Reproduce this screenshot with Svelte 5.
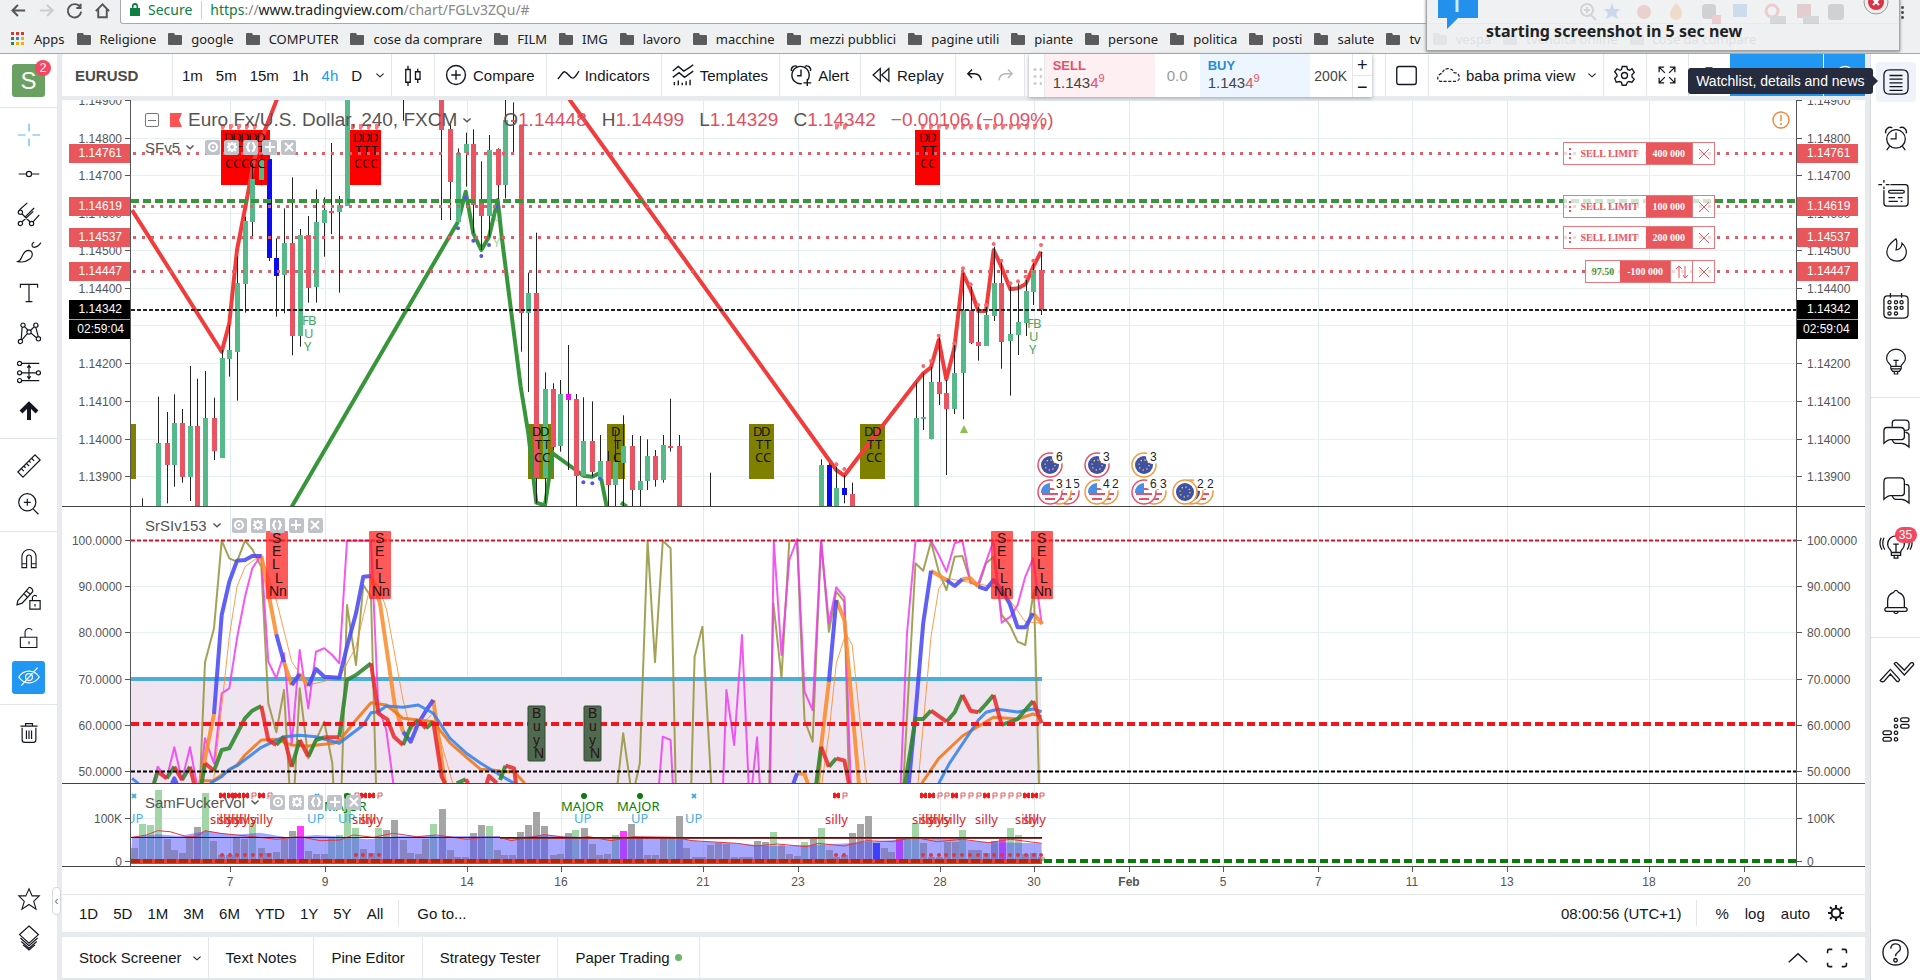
<script>
  const circle = (x, y, r) => `M${x - r} ${y}a${r} ${r} 0 1 0 ${2 * r} 0a${r} ${r} 0 1 0 ${-2 * r} 0`;

  const icons = {
    back: 'M25 14H4M13 5L4 14l9 9',
    forward: 'M3 14h21M15 5l9 9-9 9',
    reload: 'M23 8A11 11 0 1 0 25 16M24 3v7h-7',
    home: 'M3 15L14 4l11 11M7 12v13h14V12',
    cross: 'M14 1v9M14 18v9M1 14h9M18 14h9',
    hline: 'M2 14h9M17 14h9' + circle(14, 14, 3),
    pitchfork: circle(4, 12, 2.5) + circle(4, 25, 2.5) + circle(17, 25, 2.5) + 'M6 23L19 11M6 14l9 9M3 9l9-8M9 18L20 7M19 23l7-8',
    brush: 'M1 24c6-2 4-12 12-13 6 0 6 7 2 10-4 3-10 4-14 3zM18 3c-2 5 4 7 10-1M18 3l2-2',
    text: 'M4 8V4h20v4M14 4v20M10 24h8',
    pattern: circle(7, 6, 2.5) + circle(22, 6, 2.5) + circle(14, 14, 2.5) + circle(4, 25, 2.5) + circle(25, 22, 2.5) + 'M6 8L5 22M9 8l4 4M16 12l4-4M12 16l-6 7M16 15l7 6M22 9l3 11',
    forecast: circle(3, 4, 2.4) + circle(3, 15, 2.4) + circle(25, 15, 2.4) + circle(3, 24, 2.4) + 'M6 4h20M6 15h16M6 24h20M14 7v14M12 9l2-3 2 3M12 19l2 3 2-3',
    ruler: 'M1 21L21 1l6 6L7 27zM5 17l3 3M8 14l2 2M11 11l3 3M14 8l2 2M17 5l3 3',
    zoom: circle(12, 12, 10) + 'M8 12h8M12 8v8M19 20l6 6',
    magnet: 'M5 25V11a9 9 0 0 1 18 0v14h-6V12a3 3 0 0 0-6 0v13zM5 20h6M17 20h6',
    pencil: 'M1 17L13 3q1-2 3-1l2 2q1 2 0 3L6 20l-6 2zM11 6l5 4M8 9l4 4M15 17h12v10H15zM18 17v-4a3 3 0 0 1 5-1M21 21v3',
    lock: 'M3 13h21v13H3zM9 13V6a5 5 0 0 1 9-2M14 18v4',
    eye: 'M2 14c6-9 18-9 24 0-6 9-18 9-24 0z' + circle(14, 14, 4) + 'M5 24L24 3',
    trash: 'M4 6h20M10 6V3h8v3M6 8v14q0 3 3 3h10q3 0 3-3V8M11 11v10M14 11v10M17 11v10',
    star: 'M14 1l4 9h9l-7 7 3 10-9-6-9 6 3-10-7-7h9z',
    layers: 'M14 0l11 10-11 10L3 10zM4 14l10 9 10-9M5 18l9 8 9-8M7 22l7 6 7-6',
    list: 'M7 1h14q6 0 6 6v14q0 6-6 6H7q-6 0-6-6V7q0-6 6-6zM7 7h14M7 11h14M7 15h14M7 19h14M7 23h14',
    alarm: circle(14, 15, 10) + 'M14 8v7H8M3 9a5 5 0 0 1 7-6M25 9a5 5 0 0 0-7-6M7 23l-3 4M21 23l3 4',
    news: 'M8 4h16q3 0 3 3v17q0 3-3 3H4q-3 0-3-3V10M8 10h13q2 0 2 1.500t-2 1.500H8q-2 0-2-1.500t2-1.500zM6 18h7M16 18h5M6 22h10M19 22h2M1-1v3M1 6v3M-5 4h4M3 4h4',
    flame: 'M14 1c2 4 1 8 0 13 4 0 7-4 7-8 9 9 5 21-6 21S-4 14 14 1z',
    calendar: 'M5 3h18q4 0 4 4v16q0 4-4 4H5q-4 0-4-4V7q0-4 4-4zM8 0v5M20 0v5' + circle(7, 10, 1.7) + circle(14, 10, 1.7) + circle(20, 10, 1.7) + circle(7, 16, 1.7) + circle(14, 16, 1.7) + circle(20, 16, 1.7) + circle(7, 22, 1.7) + circle(14, 22, 1.7),
    bulb: 'M8 19c0-3-5-4-5-9a11 11 0 0 1 22 0c0 5-5 6-5 9zM8 19v3l2 3h8l2-3v-3M12 25v3h4v-3M11 12h6M14 12v7M8 22h12',
    stream: 'M9 21c0-3-4-4-4-9a9 9 0 0 1 18 0c0 5-4 6-4 9zM9 21v3h10v-3M12 24v3h4v-3M11 12h6M14 12v9M1 5q-3 7 1 13M-2 5q-3 7 1 13M27 5q3 7-1 13M30 5q3 7-1 13',
    chats: 'M10 6V2q0-3 3-3h11q4 0 4 4v5q0 2-5 2M4 7h15q4 0 4 4v6q0 3-3 3H8q-3 0-7 4V11q0-4 3-4zM10 20q1 4 4 4h6q4 0 8 4V15q0-2-4-3',
    chat: 'M5 1h14q4 0 4 4v12q0 3-3 3H8q-3 0-7 4V5q0-4 4-4zM10 20q1 4 4 4h6q4 0 8 4V11q0-3-4-3',
    bell: 'M5 20V13C5 8 8 5 11 4q3-5 6 0c3 1 6 4 6 9v7M4 20h20q2 0 2 2t-2 2H4q-2 0-2-2t2-2zM11 24q3 5 6 0',
    flow: 'M-3 21L8 9l10 11q-1 3-3 2l-7-8-7 8q-3 1-4-1zM12 3q2-3 4 0l7 7 7-8q3-1 3 2L23 15z',
    dom: circle(14, 3, 1.8) + circle(14, 10, 1.8) + circle(14, 17, 1.8) + circle(14, 24, 1.8) + 'M21 1h5q2 0 2 2t-2 2h-5q-2 0-2-2t2-2zM21 8h5q2 0 2 2t-2 2h-5q-2 0-2-2t2-2zM2 15h5q2 0 2 2t-2 2H2q-2 0-2-2t2-2zM2 22h5q2 0 2 2t-2 2H2q-2 0-2-2t2-2z',
    help: circle(14, 14, 13) + 'M9 10c1-7 10-6 10 0 0 4-5 3-5 8' + circle(14, 22, 1.8),
    candles: 'M5 6h6v17H5zM8 1v5M8 23v5M18 9h6v10h-6zM21 5v4M21 19v5',
    compare: circle(14, 14, 12) + 'M14 8v12M8 14h12',
    wave: 'M1 19c4-3 6-10 9-9 4 1 6 8 10 8 3 0 5-5 8-9',
    templates: 'M1 9l7-6 7 6 8-5 4-3M1 17l8-6 7 6 7-5 4-3M3 23v4M8 21v6M13 24v3M18 22v5M23 20v7',
    alert: 'M22 21a11 11 0 1 0-7 4M14 7v8H9M2 9a5 5 0 0 1 7-6M26 9a5 5 0 0 0-7-6M22 19v9M17 24h10',
    replay: 'M13 5L3 14l10 9zM25 5l-10 9 10 9z',
    undo: 'M10 4L3 11l7 7M3 11h11q9 0 11 11',
    redo: 'M18 4l7 7-7 7M25 11H14q-9 0-11 11',
    square: 'M4 2h20q3 0 3 3v18q0 3-3 3H4q-3 0-3-3V5q0-3 3-3z',
    gear: circle(14, 14, 4) + 'M11 2h6l1 4 3 1 3-2 3 5-3 3v3l3 3-3 4-4-1-2 1-2 4h-5l-1-4-3-1-4 1-2-5 3-3v-2L1 9l3-4 4 2 2-1z',
    expand: 'M3 10V3h7M3 3l8 8M18 3h7v7M25 3l-8 8M3 18v7h7M3 25l8-8M25 18v7h-7M25 25l-8-8',
    corners: 'M2 8V5q0-2 2-2h4M20 3h4q2 0 2 2v3M26 20v3q0 2-2 2h-4M8 25H4q-2 0-2-2v-3',
    camera: 'M3 8h5l2-4h8l2 4h5v15H3z' + circle(14, 15, 5),
    play: circle(14, 14, 12) + 'M11 9l8 5-8 5z',
    down: 'M4 10l10 9 10-9',
    up: 'M1 20L14 8l13 12',
    cloud: 'M7 22H4q-5-3-1-8 2-2 4-2 2-7 9-6 5 1 6 5 6 0 7 6 0 4-4 5z'
  };

  const bookmarks = ['Religione', 'google', 'COMPUTER', 'cose da comprare', 'FILM', 'IMG', 'lavoro', 'macchine', 'mezzi pubblici', 'pagine utili', 'piante', 'persone', 'politica', 'posti', 'salute', 'tv', 'vespa', 'tvendita online', 'cose da compare'];
  const drawGroups = [['cross', 'hline', 'pitchfork', 'brush', 'text', 'pattern', 'forecast', 'arrow'], ['ruler', 'zoom'], ['magnet', 'pencil', 'lock', 'eye'], ['trash']];
  const sideGroups = [['list', 'alarm', 'news', 'flame', 'calendar', 'bulb'], ['chats', 'chat', 'stream', 'bell'], ['flow', 'dom']];
  const ranges = ['1D', '5D', '1M', '3M', '6M', 'YTD', '1Y', '5Y', 'All'];

  // Chart data is kept in tile space: a tile has an origin and a number of units per pixel.
  const A = [0, 150, 3], B = [440, 90, 3], C = [860, 90, 3], D = [0, 500, 3], E = [500, 500, 2.703];
  const px = (t, x) => t[0] + x / t[2];
  const py = (t, y) => t[1] + y / 3;
  const line = (t, s) => s.split('|').map((seg) => 'M' + seg.trim().split(' ').map((p) => {
    const [x, y] = p.split(',').map(Number);
    return px(t, x).toFixed(1) + ' ' + py(t, y).toFixed(1);
  }).join('L')).join('');

  const colour = { g: '#56b98a', r: '#ea5362', b: '#0a0af5', m: '#ee10ee' };
  // x, high, body top, body bottom, low, colour
  const candleRows = [
    [A, `427 1045 0 0 1068 r;473 740 879 1070 1070 g;500 786 879 945 1060 r;523 733 819 945 1010 g;546 777 819 981 998 r;569 648 829 981 1053 g;592 686 829 1070 1070 r;615 663 803 1070 1070 g;642 743 803 902 930 r;665 600 624 924 924 g;688 525 600 628 680 g;711 320 399 605 752 g;734 200 213 402 488 g;757 40 88 216 260 g;784 0 28 92 106 g;807 28 28 326 333 b;829 265 323 376 500 b;853 175 280 376 490 g;876 82 280 558 616 r;899 237 254 558 590 g;925 198 254 412 458 r;949 118 216 412 458 g;972 142 180 220 320 g;994 -21 182 187 252 r;1018 138 165 187 428 g;1041 -150 -150 168 168 g;1209 -150 0 0 -88 r`],
    [B, `4 30 30 120 390 r;31 95 117 277 390 r;54 175 188 395 395 g;77 128 162 190 290 g;100 118 162 344 430 r;124 214 340 378 480 r;147 135 180 378 440 g;173 175 178 285 330 r;196 30 90 285 325 g;219 37 90 97 188 r;242 105 105 670 785 r;265 548 609 670 906 g;289 428 609 1165 1240 r;315 847 897 1165 1240 g;338 880 897 1070 1080 r;361 870 913 1068 1085 g;384 765 913 930 1140 m;407 912 927 1157 1248 r;430 922 1053 1157 1157 g;457 934 1053 1145 1160 r;480 1035 1112 1165 1165 g;503 1083 1112 1185 1248 r;526 1020 1115 1185 1248 g;550 976 1068 1118 1248 g;575 1035 1068 1200 1248 r;599 1038 1172 1200 1248 g;622 1048 1098 1173 1200 g;645 1080 1098 1170 1190 r;668 1035 1065 1170 1178 g;691 926 1067 1072 1085 r;718 1035 1068 1250 1250 r;810 1148 0 0 1248 r;1143 1108 1125 1250 1250 g;1166 1120 1125 1250 1250 b;1189 1130 1193 1250 1250 g;1213 1155 1193 1215 1240 b;1236 1178 1211 1250 1250 r`],
    [C, `167 878 983 1250 1250 g;190 850 980 986 1020 g;213 830 877 1048 1048 g;236 740 877 912 945 r;259 870 909 957 1155 r;283 760 848 957 972 g;309 540 660 850 988 g;332 590 660 758 762 r;355 650 755 768 812 r;378 650 675 768 768 g;401 470 579 678 693 g;424 515 579 755 836 r;451 590 732 754 917 g;474 580 695 735 795 g;497 570 602 697 738 g;520 520 540 605 645 g;543 485 540 660 675 r`]
  ];
  const candles = candleRows.flatMap(([t, rows]) => rows.split(';').map((row) => {
    const p = row.split(' ');
    const n = p.map(Number);
    return { x: Math.round(px(t, n[0])), hi: py(t, n[1]), top: Math.round(py(t, n[2])), h: Math.round((n[3] - n[2]) / 3), lo: py(t, n[4]), fill: colour[p[5]] };
  }));

  const redZig = line(A, '396,180 665,605 688,520 711,300 740,150 762,30 795,-60 832,-155') +
    line(B, '388,28 1189,1140 1213,1157 1329,1004') +
    line(C, '70,1004 167,878 190,850 213,832 236,750 259,868 283,775 309,550 332,600 355,663 378,663 401,480 424,530 451,598 474,595 497,582 520,530 543,485');
  const greenZig = line(A, '875,1070 1374,215') + line(B, '54,395 77,305 100,430 124,480 147,440 173,330 185,440 242,890 265,1030 289,1238 315,1246 338,1090 407,1140 430,1157 457,1160 480,1148 500,1250|543,1238 560,1250');

  const grid = [230, 325, 467, 561, 703, 798, 940, 1034, 1129, 1223, 1318, 1412, 1507, 1649, 1744];
  const dates = ['7', '9', '14', '16', '21', '23', '28', '30', 'Feb', '5', '7', '11', '13', '18', '20'];
  const prices = [[100, '1.14900'], [138, '1.14800'], [175, '1.14700'], [213, '1.14600'], [250, '1.14500'], [288, '1.14400'], [325, '1.14300'], [363, '1.14200'], [401, '1.14100'], [439, '1.14000'], [476, '1.13900']];
  const orders = [[153, '1.14761'], [206, '1.14619'], [237, '1.14537'], [271, '1.14447']];
  const tags = [...orders.map(([y, t]) => [y, t, '#e8575b']), [309, '1.14342', '#000'], [329, '02:59:04', '#000']];
  const levels = [[540, '100.0000'], [586, '90.0000'], [632, '80.0000'], [679, '70.0000'], [725, '60.0000'], [771, '50.0000']];
  const volumes = [[818, '100K'], [861, '0']];

  const boxes = [[221, 49, 5, 224], [350, 31, 3, 353], [915, 25, 2, 919]];
  const olive = [[131, 5, 0, 0], [528, 26, 2, 532], [607, 18, 1, 611], [749, 25, 2, 753], [860, 25, 2, 864]];
  const hits = [223, 231, 239, 247, 255, 353, 361, 369, 377, 837, 845, ...Array.from({ length: 16 }, (_, i) => 923 + i * 8)];
  const peaks = [[190, 828], [213, 813], [236, 737], [283, 760], [309, 535], [332, 583], [355, 645], [378, 645], [401, 462], [424, 512], [451, 580], [474, 574], [497, 560], [520, 512], [543, 465], [-71, 1123], [-47, 1137]];
  const dips = [[54, 415], [77, 323], [100, 452], [124, 498], [147, 465], [173, 350], [430, 1177], [457, 1180], [480, 1166]];

  const orange = '#fb8c2e', blue = '#4a4af5', green = '#2c862c', red = '#e82c2c';
  const osc = [
    ['#93933a', 2, line(D, '600,850 615,487 642,385 665,122 688,175 711,185 735,122 757,148 784,200 805,610 829,697 852,570 868,850|884,850 899,565 925,775 948,720 973,665 997,790 1000,850|1025,850 1041,315 1068,495 1090,255 1113,290 1128,850') + line(E, '318,850 333,700 352,850|366,850 378,790 399,122 419,487 440,122 461,145 475,850|517,850 526,470 547,380 571,850|728,850 739,310 761,533 782,122 803,122 823,660 845,725 868,122 889,395 909,275 931,305 943,850|1090,850 1123,190 1144,212 1165,125 1186,215 1207,270 1229,170 1250,168 1272,245 1293,260 1314,190 1334,170 1356,345 1378,375 1399,425 1420,435 1443,270 1457,850')],
    ['#ee3cee', 2, line(D, '460,850 473,800 500,835 523,742 546,840 570,742 590,850|600,850 615,715 642,790 665,580 688,565 711,415 735,290 757,205 784,165 805,485 829,535 852,460 875,735 899,450 925,625 948,455 973,445 997,465 1018,490 1041,122 1113,122 1135,620 1159,690 1180,850') + line(E, '430,850 440,710 461,720 467,850|603,850 612,570 633,735 654,405 672,850|682,850 695,712 702,850|730,850 740,122 761,465 782,180 803,118 823,575 845,630 868,122 889,370 909,262 931,292 948,850|1083,850 1100,400 1123,122 1165,122 1186,165 1207,215 1229,130 1250,122 1272,250 1293,250 1314,185 1334,122 1356,368 1380,350 1399,315 1420,230 1441,175 1464,370')],
    [orange, 1, line(D, '640,850 665,620 688,410 711,260 735,200 784,165 829,300 875,485 899,520 925,555 1018,533 1068,440 1113,250 1135,255 1160,330 1209,600 1232,690 1278,660 1300,640 1330,750 1358,850') + line(E, '870,850 889,700 909,490 935,400 952,435 991,850|1130,850 1165,410 1186,265 1207,235 1334,260 1356,275 1378,300 1420,365 1466,370')],
    [orange, 4, line(D, '600,850 615,775 642,642|784,168 829,403|852,487 875,555|899,522 925,558|1113,228 1140,310 1159,440 1185,620 1209,695|1300,600 1335,850') + line(E, '803,820 823,822 832,850|860,850 868,740 889,545|909,300 931,360 970,850|1165,212 1207,240|1250,237 1272,235 1293,260|1441,340 1466,372')],
    [blue, 4, line(D, '642,642 665,345 688,245 711,182 735,180 757,168 784,168|829,403 852,487|875,555 899,522|925,558 948,507 973,530 1018,533 1041,440 1068,340 1090,230 1113,228|1209,695 1232,725 1255,670 1278,632 1300,600|516,850 523,835 530,850') + line(E, '793,850 803,820|889,545 909,300|1105,850 1123,640 1144,370 1165,212|1207,240 1229,258 1250,237|1293,260 1314,268 1334,240 1356,270 1378,312 1399,382 1420,382 1441,340')],
    ['#ee7410', 3, line(D, '600,842 640,842 665,825 711,795 735,765 784,720 829,718 875,735 925,738 1000,730 1020,720 1068,660 1113,608 1159,615 1209,655 1255,660 1300,665 1349,728 1397,770 1442,808 1500,812') + line(E, '0,815 38,815 67,850|1140,850 1186,775 1250,708 1334,652 1399,657 1441,642 1464,650')],
    ['#2f80ea', 3, line(D, '396,835 415,850|630,850 665,830 688,808 711,797 784,742 852,710 899,706 948,710 1018,730 1090,675 1113,638 1135,635 1159,618 1209,622 1255,615 1300,640 1349,714 1397,758 1442,790 1500,825') + line(E, '0,825 38,850|1186,850 1215,790 1293,660 1314,637 1345,628 1399,636 1441,627 1464,635')],
    [green, 4, line(D, '462,850 473,815|500,835 523,800|546,840 570,800|605,850 615,790|642,812 665,750 688,745 735,655 757,632 784,618|829,735 852,710|875,800 899,720|925,770 948,720 973,712|1018,710 1041,540 1068,525 1113,490|1209,735 1232,680 1255,660|1278,685 1300,665|1370,850 1397,838') + line(E, '0,840 15,797|855,850 868,740|889,800 909,775|1095,850 1123,657 1144,657 1165,632|1207,665 1229,637 1250,585|1293,637 1314,612 1334,585|1356,675 1399,657 1441,603')],
    [red, 4, line(D, '473,815 500,835|523,800 546,840|570,800 582,850|615,790 642,812|784,618 805,720 829,735|852,710 875,800|899,720 925,770|973,712 1018,712|1113,490 1135,640 1162,658 1182,710 1209,735|1255,660 1278,685|1300,665 1325,830 1335,850|1397,838 1405,850|1460,850 1467,828 1490,850') + line(E, '15,797 38,805 43,850|868,740 889,800|909,775 931,782 943,850|1165,632 1207,665|1250,585 1272,632 1293,637|1334,585 1356,675|1441,603 1464,670')]
  ];

  const volColour = { o: '#bdbd8c', g: '#a3d6a6', k: '#a5a5a5', m: '#ff3cff', b: '#3030ff' };
  const volRows = [
    [D, '403 1045 o;426 972 g;450 976 g;473 870 g;500 1018 o;523 1050 o;546 1060 o;568 1012 o;591 980 k;615 880 g;639 1022 o;663 1066 o;686 1066 o;709 1012 o;733 1016 o;757 972 g;782 1044 o;805 1060 o;829 1056 o;852 1016 o;875 993 k;899 978 m;925 1053 o;948 1063 o;971 1063 o;993 1010 g;1017 1006 g;1041 878 g;1066 983 g;1088 1046 o;1112 1060 o;1135 983 g;1159 989 k;1182 959 k;1209 1020 o;1230 1060 o;1253 1063 o;1276 1016 o;1300 972 g;1325 928 k;1349 1050 o;1372 1072 o;1395 1070 o;1419 998 k;1442 975 k;1467 979 g;1490 1050 o'],
    [E, '12 1066 o;33 1066 o;55 996 k;76 976 k;97 936 k;120 979 k;142 1066 o;163 1062 o;183 999 k;204 991 g;226 983 k;248 1032 o;268 1066 o;290 1063 o;312 1006 g;333 992 m;355 972 k;376 1010 k;397 1066 o;418 1066 o;440 1018 o;461 1015 g;483 948 k;504 1044 o;526 1070 o;547 1070 o;567 1035 o;589 1030 o;610 1033 o;632 1072 o;653 1072 o;674 1072 o;695 1023 k;717 1026 k;739 996 g;760 1036 o;781 1063 o;803 1069 o;823 1025 g;845 1015 k;867 983 g;888 1050 o;909 1072 o;930 1066 o;951 999 k;972 972 k;994 948 k;1016 1030 b;1037 1044 o;1057 1056 o;1079 1012 m;1100 1015 g;1122 968 g;1144 1028 o;1165 1070 o;1186 1070 o;1208 1026 o;1229 1026 o;1250 989 g;1272 1050 o;1293 1050 o;1314 1060 o;1334 1022 k;1356 1010 m;1378 983 g;1399 1004 g;1420 1063 o;1441 1060 o;1462 1070 o']
  ];
  const bars = volRows.flatMap(([t, rows]) => rows.split(';').map((row) => {
    const [x, y, c] = row.split(' ');
    return { x: Math.round(px(t, +x)) - 3, y: Math.round(py(t, +y)), fill: volColour[c] };
  }));
  const volTop = line(D, '396,1012 470,1003 540,1008 620,992 700,1005 780,998 860,1012 950,1005 1050,1012 1100,1018 1200,1008 1500,1008') + line(E, '0,1015 120,1006 300,1015 480,1015 540,1024 640,1030 720,1038 840,1035 940,1030 1060,1020 1180,1012 1300,1025 1464,1030').replace('M', 'L');
  const volRed = line(D, '396,1012 440,1005 473,992 510,995 560,1010 590,1010 615,992 660,1000 740,1008 830,1018 900,1010 960,1022 1020,1020 1060,1005 1120,1012 1180,1000 1250,1010 1310,1005 1400,1018 1450,1012 1500,1012') + line(E, '30,1022 120,1004 200,1015 240,1010 300,1022 360,1010 470,1012 520,1022 640,1030 690,1038 750,1032 830,1040 860,1030 930,1038 990,1022 1060,1025 1120,1012 1180,1025 1250,1018 1320,1028 1380,1018 1464,1030').replace('M', 'L');
  const marks = [[222, 1], [230, 1], [237, 1], [245, 1], [253, 0], [261, 1], [269, 0], [356, 0], [363, 1], [371, 1], [379, 0], [836, 1], [844, 0], [923, 1], [931, 1], [939, 0], [946, 0], [954, 1], [962, 0], [970, 0], [978, 0], [986, 1], [994, 0], [1002, 0], [1010, 0], [1018, 0], [1026, 1], [1034, 1], [1041, 0]];
  const silly = [210, 218, 226, 234, 250, 352, 360, 825, 912, 920, 928, 943, 975, 1015, 1023];
  const ups = [[126, 819], [307, 819], [338, 819], [574, 819], [631, 819], [685, 819]];

  const events = [
    [1050, 465, 'eu', '#e8506a', '6'], [1097, 465, 'eu', '#e8506a', '3'], [1144, 465, 'eu', '#f09a3c', '3'],
    [1067, 492, 'us', '#e8506a', '5'], [1059, 492, 'us', '#f09a3c', '1'], [1050, 492, 'us', '#e8506a', '3'],
    [1106, 492, 'us', '#f09a3c', '2'], [1097, 492, 'us', '#f09a3c', '4'],
    [1154, 492, 'us', '#f09a3c', '3'], [1144, 492, 'us', '#e8506a', '6'],
    [1201, 492, 'us', '#f09a3c', '2'], [1191, 492, 'eu', '#f09a3c', '2'], [1185, 492, 'eu', '#f09a3c', '']
  ];
</script>

{#snippet icon(name, size = 22, weight = 1.4)}
  <svg width={size} height={size} viewBox="0 0 28 28" fill="none" stroke="currentColor" stroke-width={weight} overflow="visible" aria-hidden="true"><path d={icons[name]} /></svg>
{/snippet}

{#snippet folder()}
  <svg width="14" height="12" viewBox="0 0 14 12" aria-hidden="true"><path d="M0 1q0-1 1-1h5l1 2h6q1 0 1 1v8q0 1-1 1H1q-1 0-1-1z" fill="#5b5b5d" /></svg>
{/snippet}

{#snippet axis(side, top, height, ticks, labels)}
  <svg class="axis {side}" {height}>
    <g transform="translate(0 {-top})">
      {#each ticks as [y, text]}
        <path d={side === 'left' ? `M63 ${y + 0.5}h6` : `M0 ${y + 0.5}h5`} stroke="#555" />
        <text x={side === 'left' ? 60 : 10} y={y + 5} text-anchor={side === 'left' ? 'end' : 'start'}>{text}</text>
      {/each}
      {#each labels as [y, text, fill]}
        <rect x={side === 'left' ? 7 : 0} y={y - 9} width="61" height="19" {fill} />
        <text x={side === 'left' ? (text.length > 7 ? 62 : 60) : (text.length > 7 ? 6 : 10)} y={y + 4} text-anchor={side === 'left' ? 'end' : 'start'} style:fill="#fff">{text}</text>
      {/each}
      {#if labels.length}<path d={side === 'left' ? 'M7 319.5h61' : 'M0 319.5h61'} stroke="#aaa" />{/if}
    </g>
  </svg>
{/snippet}

{#snippet tools(name)}
  <button class="study">{name} {@render icon('down', 10, 4)}</button>
  <span class="mini">
    {#each [['Hide', circle(7, 7, 4) + 'M6 7h2'], ['Format', circle(7, 7, 3) + 'M7 2v2M7 10v2M2 7h2M10 7h2M3 3l2 2M9 9l2 2M11 3L9 5M3 11l2-2'], ['Source', 'M6 3q-2 0-2 2t-2 2q2 0 2 2t2 2M8 3q2 0 2 2t2 2q-2 0-2 2t-2 2'], ['Add', 'M7 2v10M2 7h10'], ['Remove', 'M3 3l8 8M11 3l-8 8']] as [label, d]}
      <button aria-label="{label} {name}"><svg width="14" height="14" viewBox="0 0 14 14" fill="none" stroke="#fff" stroke-width="2"><path {d} /></svg></button>
    {/each}
  </span>
{/snippet}

{#snippet verticals()}
  {#each grid as x}<path d="M{x + 0.5} 90V900" stroke="#e1ecf2" />{/each}
{/snippet}

<div class="browser">
  <div class="address">
    <div class="nav">
      {#each ['back', 'forward', 'reload', 'home'] as n}<button aria-label={n} class:dim={n === 'forward'}>{@render icon(n, 17, 3.2)}</button>{/each}
    </div>
    <div class="url">
      <svg width="10" height="13" viewBox="0 0 10 13"><path d="M0 5h10v8H0zM2 5V3a3 3 0 0 1 6 0v2" fill="#0b8043" stroke="none" /><path d="M3.500 5V3.500a1.500 1.500 0 0 1 3 0V5z" fill="#fff" /></svg>
      <span class="secure">Secure</span>
      <span class="link"><b>https</b><i>://</i>www.tradingview.com<i>/chart/FGLv3ZQu/#</i></span>
    </div>
    <span class="more"></span>
  </div>
  <nav class="bookmarks">
    <a href="#apps"><svg width="14" height="14" viewBox="0 0 14 14">
      {#each [['#d33c2c', 0, 0], ['#d33c2c', 5, 0], ['#d33c2c', 10, 0], ['#2b8a4a', 0, 5], ['#3b7de0', 5, 5], ['#f0b000', 10, 5], ['#2b8a4a', 0, 10], ['#f0b000', 5, 10], ['#f0b000', 10, 10]] as [fill, x, y]}<rect {x} {y} width="3" height="3" {fill} />{/each}
    </svg>Apps</a>
    {#each bookmarks as b}<a href="#{b}">{@render folder()}{b}</a>{/each}
  </nav>
  <div class="notice" role="status">
    <svg class="balloon" width="40" height="30" viewBox="0 0 40 30"><path d="M0 0h40v18H20L9 29V18H0z" fill="#2490ee" /><path d="M19 0v12" stroke="#cfe8ff" stroke-width="3" /></svg>
    <strong>starting screenshot in 5 sec new</strong>
    <button aria-label="Close notification"><svg width="26" height="26" viewBox="0 0 26 26"><circle cx="13" cy="13" r="12" fill="#eee" stroke="#999" /><circle cx="13" cy="13" r="8" fill="#d93346" /><path d="M10 10l6 6M16 10l-6 6" stroke="#fff" stroke-width="2" /></svg></button>
    <svg class="ghosts" width="290" height="24" viewBox="0 0 290 24">
      <circle cx="9" cy="10" r="6" fill="none" stroke="#555" stroke-width="2" /><path d="M13 15l5 5M6 10h6M9 7v6" stroke="#555" stroke-width="2" />
      <path d="M34 3l2 6h6l-4 4 2 6-6-3-6 3 2-6-4-4h6z" fill="#2a6de0" /><circle cx="66" cy="12" r="7" fill="#e0403c" /><path d="M98 3c8 6 8 16 0 17-8-1-8-9 0-17" fill="#f07820" />
      <rect x="124" y="4" width="14" height="15" rx="4" fill="#444" /><rect x="134" y="15" width="9" height="10" fill="#e03030" /><rect x="155" y="4" width="14" height="13" fill="#3b7de0" />
      <circle cx="194" cy="11" r="6" fill="none" stroke="#e03030" stroke-width="3" /><rect x="192" y="16" width="16" height="9" fill="#666" /><rect x="219" y="4" width="14" height="14" fill="#b03030" /><rect x="225" y="16" width="16" height="9" fill="#666" /><rect x="250" y="4" width="16" height="16" rx="3" fill="#444" />
    </svg>
  </div>
  <span class="menu"></span>
</div>

<div class="app">
  <aside class="drawing">
    <div class="account"><button class="avatar" aria-label="Account">S<span class="badge">2</span></button></div>
    {#each drawGroups as group, i}
      <div class="group g{i}">
        {#each group as n}
          <button aria-label={n} class:on={n === 'eye'} class:pale={n === 'cross'}>
            {#if n === 'arrow'}<svg width="20" height="20" viewBox="0 0 20 20"><path d="M10 19V4M2 11l8-8 8 8" fill="none" stroke="#131722" stroke-width="4" /></svg>{:else}{@render icon(n, n === 'lock' || n === 'magnet' ? 22 : 24, 1.4)}{/if}
          </button>
        {/each}
      </div>
    {/each}
    <div class="group last">
      <button aria-label="favourites">{@render icon('star')}</button>
      <button aria-label="object tree">{@render icon('layers', 24)}</button>
    </div>
    <button class="collapse" aria-label="Collapse toolbar">‹</button>
  </aside>

  <main>
    <header>
      <button class="symbol">EURUSD</button>
      <div class="cell intervals">
        {#each ['1m', '5m', '15m', '1h', '4h', 'D'] as t}<button class:active={t === '4h'}>{t}</button>{/each}
        <button aria-label="More intervals">{@render icon('down', 10, 3)}</button>
      </div>
      <button class="cell" aria-label="Chart style">{@render icon('candles', 21, 1.8)}</button>
      {#each [['compare', 'Compare'], ['wave', 'Indicators'], ['templates', 'Templates'], ['alert', 'Alert'], ['replay', 'Replay']] as [n, label]}
        <button class="cell">{@render icon(n, n === 'replay' ? 20 : 22, 1.8)}{label}</button>
      {/each}
      <div class="cell history"><button aria-label="Undo">{@render icon('undo', 17, 2.4)}</button><button aria-label="Redo" class="faint">{@render icon('redo', 17, 2.4)}</button></div>

      <div class="trade">
        <span class="grip"></span>
        <button class="quote sell"><b>SELL</b><span>1.143<em>4<sup>9</sup></em></span></button>
        <span class="spread">0.0</span>
        <button class="quote buy"><b>BUY</b><span>1.143<em>4<sup>9</sup></em></span></button>
        <button class="lots">200K</button>
        <span class="steps"><button aria-label="Increase">+</button><button aria-label="Decrease">−</button></span>
      </div>

      <button class="cell" aria-label="Layout">{@render icon('square', 21, 1.8)}</button>
      <button class="cell view">
        <svg width="27" height="22" viewBox="0 0 30 28" fill="none" stroke="#222" stroke-width="1.600" stroke-dasharray="4 2"><path d={icons.cloud} /></svg>
        baba prima view <span class="push">{@render icon('down', 10, 3)}</span>
      </button>
      <button class="cell" aria-label="Settings">{@render icon('gear', 21, 1.8)}</button>
      <button class="cell" aria-label="Fullscreen">{@render icon('expand', 20, 1.8)}</button>
      <button class="cell" aria-label="Snapshot">{@render icon('camera', 20, 1.8)}</button>
      <button class="publish" aria-label="Publish"></button>
      <button class="publish small" aria-label="Start stream">{@render icon('play', 20, 1.8)}</button>
    </header>

    <section class="chart">
      <div class="pane price">
        {@render axis('left', 100, 406, prices, tags)}
        <div class="plot">
          <svg width="100%" height="406">
            <g transform="translate(-131 -100)">
              {@render verticals()}
              {#each prices as [y]}<path d="M131 {y + 0.5}H4000" stroke="#e6eff4" />{/each}
              {#each boxes as [x, w]}<rect {x} y="130" width={w} height="55" fill="#f00" />{/each}
              {#each olive as [x, w]}<rect {x} y="424" width={w} height="55" fill="#808000" />{/each}
              <path d={redZig} class="zig" stroke="#f23c3c" />
              <path d={greenZig} class="zig" stroke="#37963a" />
              {#each candles as c}
                <path d="M{c.x + 0.5} {c.hi}V{c.lo}" stroke="#222" />
                {#if c.h > 0}<rect x={c.x - 2} y={c.top} width="5" height={c.h} fill={c.fill} />{/if}
              {/each}
              {#each boxes as [, , n, tx]}
                {#each Array(n) as _, i}<text x={tx + i * 8} y="142" class="flag">D</text><text x={tx + i * 8 + 2} y="155" class="flag">T</text><text x={tx + i * 8 + 1} y="168" class="flag">C</text>{/each}
              {/each}
              {#each olive as [, , n, tx]}
                {#each Array(n) as _, i}<text x={tx + i * 8} y="436" class="flag">D</text><text x={tx + i * 8 + 3} y="449" class="flag">T</text><text x={tx + i * 8 + 2} y="462" class="flag">C</text>{/each}
              {/each}
              {#each hits as x}<path d="M{x - 2} 124h4v3l-2 3-2-1z" fill="#ff4a4a" opacity="0.75" />{/each}
              {#each peaks as [x, y]}<circle cx={px(C, x)} cy={py(C, y)} r="2" fill="#f56b6b" />{/each}
              {#each dips as [x, y]}<circle cx={px(B, x)} cy={py(B, y)} r="2" fill="#5555ee" />{/each}
              <path d="M131 201H4000" stroke="#37963a" stroke-width="4" stroke-dasharray="8 4" />
              {#each orders as [y]}<path d="M133 {y + 0.5}H4000" stroke="#e35d66" stroke-width="3" stroke-dasharray="3 6" />{/each}
              <path d="M131 310H4000" stroke="#222" stroke-width="2" stroke-dasharray="4 2" />
              {#each [306, 1031] as x}
                <g class="buy-mark" transform="translate({x} {x > 900 ? 328 : 325})"><text x="-4">F</text><text x="2">B</text><text x="-2" y="13">U</text><text x="-2" y="26">Y</text></g>
              {/each}
              <g class="buy-mark" opacity="0.5"><text x="493" y="221">U</text><text x="493" y="247">Y</text></g>
              <path d="M960 433l4-8 4 8z" fill="#8bc34a" />
              {#each events as [x, y, kind, ring, n]}
                <circle cx={x} cy={y} r="12" fill="#fff" stroke={ring} stroke-width="1.500" />
                {#if kind === 'eu'}
                  <circle cx={x} cy={y} r="9" fill="#3f51a5" /><circle cx={x} cy={y} r="5" fill="none" stroke="#f2cf4a" stroke-width="1.300" stroke-dasharray="1.300 2.600" />
                {:else}
                  <path d="M{x - 8} {y - 3}h16M{x - 8} {y + 2}h16M{x - 5} {y + 7}h10" stroke="#e8506a" stroke-width="2" /><path d="M{x} {y - 9}a9 9 0 0 0-9 9v1h9z" fill="#4a90e2" />
                {/if}
                {#if n}<circle cx={x + 9} cy={y - 8} r="7" fill="#fff" /><text x={x + 6} y={y - 4} class="count">{n}</text>{/if}
              {/each}
            </g>
          </svg>
          <div class="legend">
            <div class="line main">
              <button class="minus" aria-label="Collapse legend"></button>
              <svg width="12" height="14" viewBox="0 0 12 14"><path d="M0 0h12L9 7l3 7H0z" fill="#ff5252" /></svg>
              <button class="title">Euro Fx/U.S. Dollar, 240, FXCM {@render icon('down', 10, 4)}</button>
              <span class="ohlc"><span>O<em>1.14448</em></span><span>H<em>1.14499</em></span><span>L<em>1.14329</em></span><span>C<em>1.14342</em></span><span><em>−0.00106 (−0.09%)</em></span></span>
            </div>
            <div class="line">{@render tools('SFv5')}</div>
          </div>
          <svg class="warn" width="18" height="18" viewBox="0 0 18 18" fill="none" stroke="#f08a3c" stroke-width="1.500"><circle cx="9" cy="9" r="8" /><path d="M9 4v6M9 12v2" /></svg>
          {#each [[153, '400 000'], [206, '100 000'], [237, '200 000']] as [y, qty]}
            <div class="order" style:top="{y - 111}px"><span class="dots"></span><button class="kind">SELL LIMIT</button><button class="qty">{qty}</button><button class="x" aria-label="Cancel order"><svg width="12" height="12" viewBox="0 0 12 12" stroke="#e8575b"><path d="M1 1l10 10M11 1L1 11" /></svg></button></div>
          {/each}
          <div class="order" style:top="160px"><button class="profit">97.50</button><button class="qty">-100 000</button><button class="x" aria-label="Reverse"><svg width="14" height="14" viewBox="0 0 14 14" fill="none" stroke="#e8575b"><path d="M4 13V1M1 4l3-3 3 3M10 1v12M8 10l2 3 3-3" /></svg></button><button class="x" aria-label="Close position"><svg width="12" height="12" viewBox="0 0 12 12" stroke="#e8575b"><path d="M1 1l10 10M11 1L1 11" /></svg></button></div>
        </div>
        {@render axis('right', 100, 406, prices, tags)}
      </div>

      <div class="pane">
        {@render axis('left', 507, 276, levels, [])}
        <div class="plot">
          <svg width="100%" height="276">
            <g transform="translate(-131 -507)">
              <rect x="131" y="680" width="910" height="120" fill="#f0e4f1" />
              {@render verticals()}
              {#each levels as [y]}<path d="M131 {y + 0.5}H4000" stroke="#e6eff4" />{/each}
              <path d="M131 679H1042" stroke="#4dacde" stroke-width="4" />
              {#each osc as [stroke, w, d]}<path {d} {stroke} stroke-width={w} fill="none" stroke-linejoin="round" opacity={w === 4 ? 0.88 : 0.85} />{/each}
              <path d="M131 540.500H4000" stroke="#e01020" stroke-width="2" stroke-dasharray="4 2" />
              <path d="M131 724H4000" stroke="#f5141e" stroke-width="4" stroke-dasharray="8 4" />
              <path d="M131 771.500H4000" stroke="#000" stroke-width="2" stroke-dasharray="4 2" />
              {#each [266, 369, 991, 1031] as x}
                <rect {x} y="531" width="22" height="68" rx="1" fill="#ff2222" opacity="0.75" />
                <g class="vert"><text x={x + 6} y="543">S</text><text x={x + 6} y="556">E</text><text x={x + 6} y="569">L</text><text x={x + 9} y="583">L</text><text x={x + 3} y="596">Nn</text></g>
              {/each}
              {#each [528, 584] as x}
                <rect {x} y="706" width="17" height="55" rx="1" fill="#506a52" stroke="#2d502f" />
                <g class="vert"><text x={x + 4} y="718">B</text><text x={x + 5} y="731">u</text><text x={x + 5} y="745">y</text><text x={x + 6} y="758">N</text></g>
              {/each}
            </g>
          </svg>
          <div class="legend low"><div class="line">{@render tools('SrSIv153')}</div></div>
        </div>
        {@render axis('right', 507, 276, levels, [])}
      </div>

      <div class="pane">
        {@render axis('left', 784, 82, volumes, [])}
        <div class="plot">
          <svg width="100%" height="82">
            <g transform="translate(-131 -784)">
              {@render verticals()}
              <path d="M131 818.500H4000" stroke="#e6eff4" />
              {#each bars as b}<rect x={b.x} y={b.y} width="7" height={861 - b.y} fill={b.fill} />{/each}
              <path d="{volTop}V861H131Z" fill="#4d4dff" opacity="0.5" />
              <path d={volRed} fill="none" stroke="#dc3a46" />
              <path d="M131 837.500H1042" stroke="#2a2430" stroke-width="1" />
              <path d="M500 838.500H1042" stroke="#8a3636" stroke-width="1" />
              <path d="M131 861.500H1042" stroke="#f03c28" stroke-width="5" />
              <path d="M131 861H1042" stroke="#b82404" stroke-width="4" stroke-dasharray="9 3" />
              <path d="M1044 861H4000" stroke="#087d08" stroke-width="4" stroke-dasharray="8 4" />
              {#each marks as [x, full]}
                <path d={full ? `M${x - 2} 793l5 5M${x + 3} 793l-5 5M${x - 2} 793v5M${x + 3} 793v5` : `M${x - 1} 799v-6h4v3h-4`} stroke="#ee1c1c" stroke-width={full ? 2 : 1} fill="none" opacity={full ? 1 : 0.75} />
                <circle cx={x} cy="855" r="2" fill="#dc3644" />
              {/each}
              {#each [584, 640, 347] as x}<circle cx={x} cy="796" r="3" fill="#0a7d0a" />{/each}
              {#each [134, 317, 694] as x}<path d="M{x - 2} 794l4 4M{x + 2} 794l-4 4" stroke="#4aaee0" stroke-width="2" />{/each}
              <g class="note" fill="#0a7d0a"><text x="561" y="811">MAJOR</text><text x="617" y="811">MAJOR</text><text x="324" y="811">MAJOR</text></g>
              <g class="note" fill="#4aaee0">{#each ups as [x, y]}<text {x} y={y + 4}>UP</text>{/each}</g>
              <g class="note" fill="#e01c24">{#each silly as x}<text {x} y="824">silly</text>{/each}</g>
            </g>
          </svg>
          <div class="legend low"><div class="line">{@render tools('SamFUckerVol')}</div></div>
        </div>
        {@render axis('right', 784, 82, volumes, [])}
      </div>

      <div class="time">
        <svg width="100%" height="27">
          {#each grid as x, i}<path d="M{x - 61.5} 0v5" stroke="#555" /><text x={x - 62} y="19" text-anchor="middle" font-weight={dates[i] === 'Feb' ? 700 : 400}>{dates[i]}</text>{/each}
        </svg>
      </div>

      <div class="footer">
        {#each ranges as r}<button>{r}</button>{/each}
        <button class="goto">Go to...</button>
        <button class="clock">08:00:56 (UTC+1)</button>
        <span class="scale"><button>%</button><button>log</button><button>auto</button>
          <button aria-label="Scale settings"><svg width="16" height="16" viewBox="0 0 16 16" fill="none" stroke="#131722"><circle cx="8" cy="8" r="4.500" stroke-width="2" /><path d="M8 0v3M8 13v3M0 8h3M13 8h3M2 2l2 2M12 12l2 2M14 2l-2 2M2 14l2-2" stroke-width="2" /></svg></button></span>
      </div>
    </section>

    <footer class="tabs">
      <button>Stock Screener <span class="gap">{@render icon('down', 10, 3)}</span></button>
      <button>Text Notes</button>
      <button>Pine Editor</button>
      <button>Strategy Tester</button>
      <button>Paper Trading <span class="dot"></span></button>
      <span class="ends"><button aria-label="Open panel">{@render icon('up', 20, 2)}</button><button aria-label="Maximize panel">{@render icon('corners', 22, 2)}</button></span>
    </footer>
  </main>

  <aside class="widgets">
    {#each sideGroups as group}
      <div class="group">
        {#each group as n}
          <button aria-label={n} class:lit={n === 'list'}>
            {@render icon(n, n === 'bulb' || n === 'flame' ? 24 : 26, 1.4)}
            {#if n === 'stream'}<span class="badge">35</span>{/if}
            {#if n === 'list'}<span class="tooltip" role="tooltip">Watchlist, details and news</span>{/if}
          </button>
        {/each}
      </div>
    {/each}
    <div class="group last"><button aria-label="Help">{@render icon('help', 27)}</button></div>
  </aside>
</div>

<style>
  :global(body) { margin: 0; background: #e8ebee; }
  * { box-sizing: border-box; }
  button { font: inherit; color: inherit; background: none; border: 0; padding: 0; margin: 0; white-space: nowrap; display: flex; align-items: center; }
  svg { display: block; flex: none; }
  em, i { font-style: normal; }

  .browser { position: relative; height: 54px; background: #eef0f1; font-family: "Noto Sans", "Open Sans", sans-serif; color: #222; overflow: hidden; border-bottom: 1px solid #a5a7a9; }
  .address { display: flex; height: 24px; align-items: flex-start; }
  .nav { display: flex; width: 120px; padding: 2px 0 0 10px; gap: 11px; color: #555; }
  .nav .dim { color: #ccc; }
  .url { flex: 1; height: 24px; background: #fff; border: 1px solid #a5a7a9; border-top: 0; border-radius: 0 0 0 3px; display: flex; align-items: center; padding: 0 0 4px 9px; font-size: 14px; line-height: 18px; }
  .secure { color: #0b8043; margin-left: 8px; padding-right: 9px; border-right: 1px solid #ccc; }
  .link { margin-left: 8px; }
  .link b { font-weight: 400; color: #0b8043; }
  .link i { color: #888; }
  .more { width: 20px; }
  .menu { position: absolute; right: 51px; top: 5px; width: 3px; height: 15px; right: 16px; background: radial-gradient(circle, #555 1px, transparent 2px) 0 0 / 3px 5px; }
  .bookmarks { display: flex; align-items: center; height: 29px; padding-left: 11px; gap: 12px; font-size: 13px; white-space: nowrap; }
  .bookmarks a { display: flex; align-items: center; gap: 9px; color: #222; text-decoration: none; }
  .notice { position: absolute; right: 20px; top: -2px; width: 474px; height: 53px; background: rgba(238, 240, 241, 0.92); border: 1px solid #a2a4a6; box-shadow: 0 1px 3px #888; }
  .notice strong { position: absolute; left: 59px; top: 22px; font-size: 16px; line-height: 20px; }
  .notice .balloon { position: absolute; left: 11px; top: 1px; }
  .notice button { position: absolute; right: 10px; top: -10px; }
  .notice .ghosts { position: absolute; right: 31px; top: 1px; opacity: 0.18; }

  .app { display: grid; grid-template-columns: 57px minmax(0, 1fr) 50px; column-gap: 5px; min-height: calc(100vh - 54px); font-family: "Liberation Sans", Arial, sans-serif; font-size: 15px; color: #131722; }
  aside { background: #fff; display: flex; flex-direction: column; position: relative; }
  aside .group { display: grid; border-bottom: 1px solid #e0e3e8; }
  aside .group button { justify-content: center; justify-self: center; align-self: center; position: relative; }
  .account { height: 54px; border-bottom: 1px solid #e0e3e8; padding: 10px 12px; }
  .avatar { width: 33px; height: 33px; background: #6aa163; color: #fff; font-size: 24px; justify-content: center; border-radius: 3px; position: relative; }
  .badge { position: absolute; background: #f7475f; color: #fff; font-size: 12px; line-height: 16px; min-width: 16px; border-radius: 8px; text-align: center; }
  .avatar .badge { right: -6px; top: -4px; }
  .drawing .group { grid-auto-rows: minmax(0, 1fr); }
  .g0 { height: 331px; padding: 7px 0; }
  .g1 { height: 93px; padding: 8px 0; }
  .g2 { height: 173px; padding: 7px 0; }
  aside .g3 { height: 55px; border: 0; }
  .drawing .pale { color: #5eb2f2; }
  .drawing .on { width: 33px; height: 33px; border-radius: 3px; background: #2196f3; color: #fff; }
  .drawing .last { margin-top: auto; border: 0; grid-auto-rows: 39px; padding-bottom: 23px; }
  .drawing .collapse { position: absolute; right: -4px; bottom: 65px; width: 9px; height: 28px; border: 1px solid #d5d8dc; border-radius: 4px; background: #fff; color: #777; font-size: 12px; justify-content: center; }
  .widgets { border-left: 1px solid #d8dce0; }
  .widgets .group { grid-auto-rows: 56px; padding: 8px 0 7px; }
  .widgets .group:first-child { padding: 0 0 7px; }
  .widgets .group:nth-child(3) { border: 0; }
  .widgets .last { margin-top: auto; border: 0; padding: 0; }
  .widgets .lit { width: 40px; height: 40px; background: #f0f3fa; border-radius: 3px; }
  .widgets .badge { top: -6px; right: -8px; width: 22px; }
  .tooltip { position: absolute; right: 43px; top: 6px; background: #262b3e; color: #fff; font-size: 14px; line-height: 26px; padding: 0 8px; border-radius: 3px; }
  .tooltip::after { content: ""; position: absolute; left: 100%; top: 8px; border: 5px solid transparent; border-left-color: #262b3e; border-right: 0; }

  main { display: flex; flex-direction: column; min-width: 0; }
  header { display: flex; height: 42px; background: #fff; margin-bottom: 4px; }
  .symbol { width: 110px; padding-left: 13px; font-weight: 700; color: #4a4a4a; font-size: 15px; }
  .cell { border-left: 1px solid #e3e6ea; padding: 0 11px 0 10px; gap: 6px; flex: none; display: flex; align-items: center; }
  .intervals { gap: 13px; padding-left: 9px; width: 219px; justify-content: flex-start; }
  .intervals .active { color: #2196f3; }
  .history { gap: 14px; width: 70px; border-right: 1px solid #e3e6ea; }
  .faint { color: #b5b8bd; }
  .trade { display: flex; height: 43px; width: 343px; margin: 0 auto 0 4px; background: #fff; box-shadow: 0 1px 4px #9aa0a8; position: relative; z-index: 2; flex: none; }
  .grip { width: 16px; border-right: 1px solid #e3e6ea; background: radial-gradient(circle, #ccc 1px, transparent 2px) 3px 12px / 6px 7px repeat; background-clip: content-box; padding: 12px 2px 12px 3px; }
  .quote { width: 110px; flex-direction: column; align-items: flex-start; padding: 4px 0 0 8px; line-height: 18px; font-size: 15px; color: #444; }
  .quote b { font-size: 13px; font-weight: 700; line-height: 16px; }
  .quote em { color: #e8506a; }
  .quote sup { font-size: 11px; line-height: 1px; }
  .sell { background: #fdeff2; } .sell b { color: #e8506a; }
  .buy { background: #edf6fe; } .buy b { color: #2c8ad8; }
  .spread { width: 45px; text-align: center; line-height: 43px; font-size: 15px; color: #999; }
  .lots { width: 42px; justify-content: center; font-size: 14px; color: #444; }
  .steps { flex: 1; border-left: 1px solid #e3e6ea; display: grid; }
  .steps button { justify-content: center; font-size: 18px; line-height: 20px; }
  .steps button + button { border-top: 1px solid #e3e6ea; }
  .view { width: 175px; padding: 0 6px; gap: 4px; }
  .push { margin-left: auto; }
  .publish { width: 93px; background: #2196f3; color: #fff; justify-content: center; }
  .publish.small { width: 42px; border-left: 1px solid #fff; }

  .chart { background: #fff; }
  .pane { display: flex; border-bottom: 1px solid #444; }
  .plot { position: relative; flex: 1; min-width: 0; overflow: hidden; }
  .axis { width: 69px; overflow: hidden; }
  .axis.left { border-right: 1px solid #555; }
  .axis.right { border-left: 1px solid #555; }
  .axis text, .time text { font-size: 12px; fill: #555; }
  .zig { fill: none; stroke-width: 4; stroke-linejoin: round; }
  .flag { font: 13px "Noto Sans", sans-serif; fill: #111; }
  .buy-mark { font: 13px "Noto Sans", sans-serif; fill: #4ea558; }
  .count { font-size: 12px; fill: #222; }
  .vert { font-size: 14px; fill: #2b1414; }
  .note { font: 13px "Noto Sans", sans-serif; }
  .legend { position: absolute; left: 14px; top: 8px; color: #555; }
  .legend.low { top: 8px; }
  .line { display: flex; align-items: center; height: 20px; }
  .line.main { height: 24px; margin-bottom: 5px; }
  .minus { width: 14px; height: 14px; border: 1px solid #777; border-radius: 2px; margin-right: 11px; justify-content: center; }
  .minus::after { content: ""; width: 8px; height: 1px; background: #777; }
  .title { font-size: 19px; margin-left: 6px; gap: 5px; }
  .ohlc { display: flex; gap: 15px; margin-left: 31px; font-size: 19px; white-space: nowrap; }
  .ohlc em { color: #e2505f; }
  .study { font-size: 15px; gap: 5px; }
  .mini { display: flex; gap: 4px; margin-left: 10px; }
  .mini button { width: 15px; height: 15px; background: #c0c2ca; border-radius: 2px; justify-content: center; }
  .warn { position: absolute; right: 6px; top: 11px; }
  .order { position: absolute; right: 81px; display: flex; height: 23px; border: 1px solid #e8787c; background: rgba(255, 255, 255, 0.75); font: 700 10px "Liberation Serif", serif; color: #e8575b; }
  .order .dots { width: 1px; margin: 5px 4px 5px 5px; border-left: 2px dotted #e8575b; }
  .order .kind { padding: 0 7px 0 5px; }
  .order .qty { background: #e8575b; color: #fff; padding: 0 7px; }
  .order .x { width: 22px; justify-content: center; border-left: 1px solid #e8787c; }
  .order .profit { color: #3c9636; padding: 0 6px; }
  .time { height: 27px; overflow: hidden; }
  .footer { display: flex; align-items: center; height: 38px; border-top: 1px solid #e3e6ea; padding: 0 19px 1px 17px; gap: 15px; }
  .goto { border-left: 1px solid #e3e6ea; height: 26px; padding-left: 18px; }
  .clock { margin-left: auto; }
  .scale { display: flex; gap: 16px; border-left: 1px solid #e3e6ea; height: 26px; padding: 0 2px 0 18px; }
  .scale button:last-child { margin-left: 2px; }
  .tabs { display: flex; margin-top: 5px; flex: 1; background: #fff; min-height: 42px; border-bottom: 2px solid #e3e6ea; }
  .tabs > button { border-right: 1px solid #e3e6ea; padding: 0 17px; }
  .tabs > button:first-child { padding: 0 6px 0 17px; }
  .gap { margin-left: 10px; }
  .dot { width: 7px; height: 7px; border-radius: 4px; background: #68b56c; margin-left: 5px; }
  .ends { margin-left: auto; display: flex; gap: 18px; padding-right: 17px; }
</style>
